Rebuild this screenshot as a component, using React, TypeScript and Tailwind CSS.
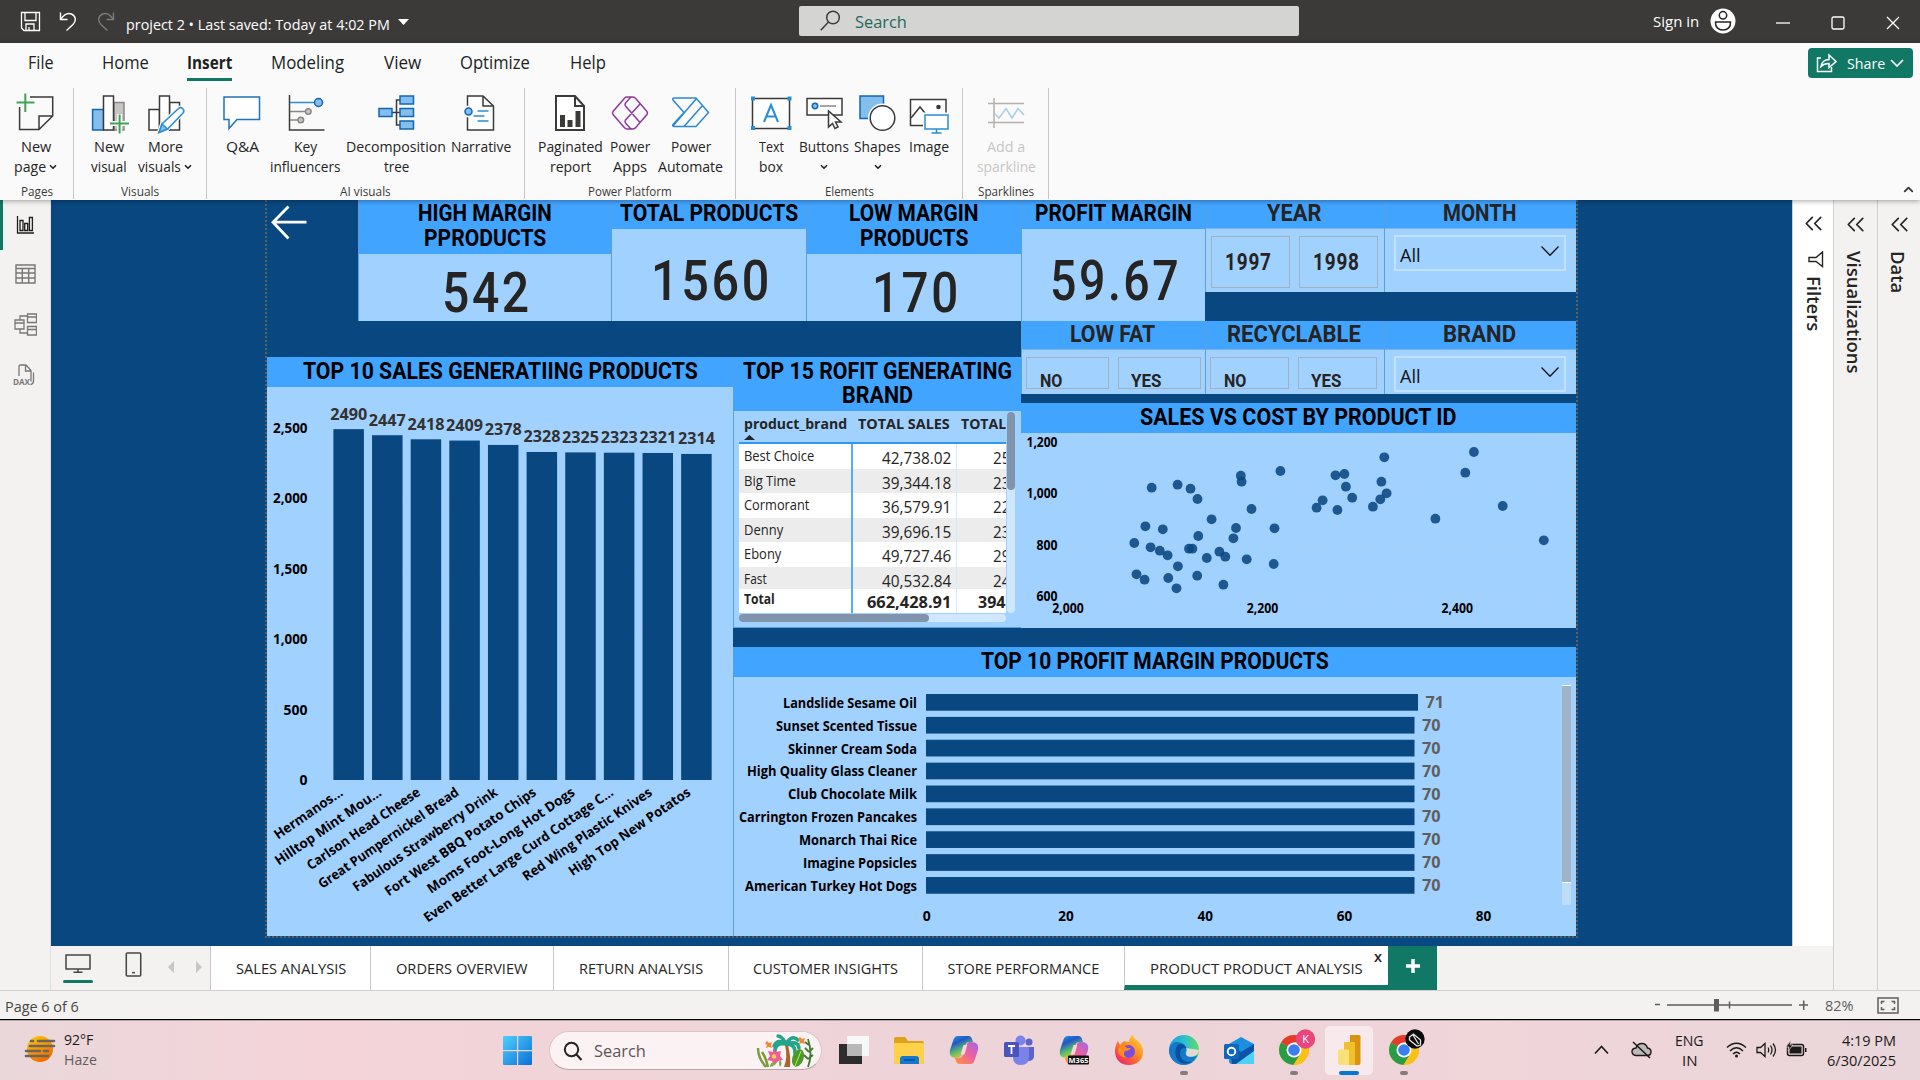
import { useLayoutEffect, useRef, useState } from "react";
import type { ReactNode } from "react";
import { ChevronDown, ChevronUp, ChevronsLeft } from "lucide-react";

/* Single line of text condensed or widened to a given width. */
function Fit({ w, className = "", children }: { w: number; className?: string; children: ReactNode }) {
  const ref = useRef<HTMLSpanElement>(null);
  const [k, setK] = useState(1);
  useLayoutEffect(() => {
    if (ref.current) setK(w / ref.current.offsetWidth);
  }, [w]);
  return (
    <span className="inline-block shrink-0 text-left" style={{ width: w }}>
      <span ref={ref} className={`inline-block origin-left whitespace-nowrap ${className}`} style={{ transform: `scaleX(${k})` }}>
        {children}
      </span>
    </span>
  );
}

const DIN = "font-['Roboto',sans-serif] font-bold text-[23px] leading-[25px]";

/* ---------- Title bar ---------- */
function TitleBar() {
  return (
    <header className="flex h-[43px] shrink-0 items-center bg-[#3b3a39] text-white">
      <div className="flex w-[799px] items-center pl-[20px]">
        <svg width="21" height="21" viewBox="0 0 21 21" fill="none" stroke="#fff" strokeWidth="1.3">
          <path d="M1.5 1.5h18v18H4L1.5 17zM5 1.5v8h11v-8M6 19.5v-6.5h8v6.5M9 16v3.5" />
        </svg>
        <svg className="ml-[18px]" width="19" height="21" viewBox="0 0 19 21" fill="none" stroke="#fff" strokeWidth="1.4">
          <path d="M1.5 1.5v7h7M1.8 8.2C5 3.5 9 1.5 12.500 3c4.500 2 5 7 1.500 10.500L7.500 19.500" />
        </svg>
        <svg className="ml-[18px]" width="19" height="21" viewBox="0 0 19 21" fill="none" stroke="#7d7b79" strokeWidth="1.4">
          <path d="M17.500 1.500v7h-7M17.200 8.200C14 3.500 10 1.500 6.500 3c-4.500 2-5 7-1.500 10.500L11.500 19.500" />
        </svg>
        <div className="ml-[11px] mt-[5px] flex items-center">
          <Fit w={264} className="text-[15px] leading-5">project 2 • Last saved: Today at 4:02 PM</Fit>
          <svg className="mb-1 ml-[8px]" width="11" height="6"><path d="M0 0h11L5.500 6z" fill="#fff" /></svg>
        </div>
      </div>
      <div className="mb-px flex h-[30px] w-[500px] items-center rounded-[2px] bg-[#d4d4d2] pl-[21px]">
        <svg className="mb-px" width="21" height="21" viewBox="0 0 21 21" fill="none" stroke="#3b3a39" strokeWidth="1.500">
          <circle cx="13" cy="7.500" r="6.300" /><path d="M8.500 12L.8 20.200" />
        </svg>
        <div className="ml-[14px] pt-px"><Fit w={52} className="text-[17px] leading-6 text-[#1f6a5c]">Search</Fit></div>
      </div>
      <div className="ml-[354px] flex items-center">
        <div className="pb-px"><Fit w={46} className="text-[15px] leading-5">Sign in</Fit></div>
        <svg className="mb-px ml-[11px]" width="26" height="26" viewBox="0 0 26 26">
          <circle cx="13" cy="13" r="12.500" fill="#fff" />
          <circle cx="13" cy="7.300" r="3.700" fill="none" stroke="#252423" strokeWidth="1.500" />
          <path d="M5.500 14h15c.3 5-2.700 8-7.500 8s-7.800-3-7.500-8z" fill="none" stroke="#252423" strokeWidth="1.500" />
        </svg>
        <svg className="ml-[40px]" width="14" height="14"><path d="M0 8h14" stroke="#fff" strokeWidth="1.300" /></svg>
        <svg className="ml-[41px] mt-[3px]" width="14" height="14"><rect x="1" y="1" width="12" height="12" rx="1.500" fill="none" stroke="#fff" strokeWidth="1.300" /></svg>
        <svg className="ml-[41px] mt-[3px]" width="14" height="14"><path d="M1 1l12 12M13 1L1 13" stroke="#fff" strokeWidth="1.300" /></svg>
      </div>
    </header>
  );
}

/* ---------- Ribbon ---------- */
const MENU: [string, number, string][] = [
  ["File", 26, "ml-[28px]"],
  ["Home", 47, "ml-[48px]"],
  ["Insert", 45, "ml-[38px]"],
  ["Modeling", 73, "ml-[39px]"],
  ["View", 37, "ml-[40px]"],
  ["Optimize", 70, "ml-[39px]"],
  ["Help", 36, "ml-[40px]"],
];

const D = "#3b3a39";
const B = "#2a8dd4";
const F = "#83beec";

const ICONS: Record<string, ReactNode> = {
  page: (<>
    <path d="M14 4H36.700V23L23 36.500H3.600V14M23 36.500V23H36.700" stroke={D} />
    <path d="M9.300 .5V19M.5 9.500H18.500" stroke="#3fa35a" strokeWidth="2" />
  </>),
  visual: (<>
    <rect x="3.600" y="16.500" width="11" height="20.500" fill={F} stroke="#1267b4" />
    <rect x="25" y="9.500" width="10" height="27.500" fill="#c8c6c4" stroke="#8a8886" />
    <rect x="14.500" y="3" width="10" height="34" fill="#fff" stroke={D} />
    <path d="M30.600 21V41M20.500 30.500H40" stroke="#fafafa" strokeWidth="5" />
    <path d="M30.600 21.500V40.500M21 30.500H40" stroke="#3fa35a" strokeWidth="2" />
  </>),
  more: (<>
    <rect x="4" y="16.500" width="10.500" height="20.500" fill="#fff" stroke={D} />
    <rect x="24.500" y="9.500" width="10" height="27.500" fill="#fff" stroke={D} />
    <rect x="14.500" y="3" width="10" height="34" fill="#fff" stroke={D} />
    <path d="M14 39.500L17 31 33.500 15.500c3-2.500 7 1.500 4.500 4.500L22.500 36z" fill="#fff" stroke="#fafafa" strokeWidth="4" />
    <path d="M14 39.500L17 31 33.500 15.500c3-2.500 7 1.500 4.500 4.500L22.500 36z" fill="#fff" stroke={B} />
    <path d="M14 39.500L17 31l5.500 5z" fill={F} stroke={B} />
  </>),
  qa: <path d="M37.500 4H2V26.500H7V35.500L15 26.500H37.500Z" fill="#fff" stroke="#1f73b7" />,
  key: (<>
    <path d="M3.500 2V37H38.500" stroke={D} />
    <path d="M4 9.500H29" stroke={B} /><circle cx="32.500" cy="9.500" r="4" fill={F} stroke="#1267b4" />
    <path d="M4 18.500H20M4 27H12" stroke="#8a8886" />
    <circle cx="22.300" cy="18.500" r="2.800" fill="#c8c6c4" stroke="#8a8886" />
    <circle cx="14.800" cy="27" r="2.800" fill="#c8c6c4" stroke="#8a8886" />
  </>),
  tree: (<>
    <path d="M16 19.500H24M24 7H20.500V32H24" stroke={D} />
    <g fill={F} stroke="#1267b4">
      <rect x="3" y="15.500" width="13" height="8" /><rect x="24" y="3" width="13.500" height="8" />
      <rect x="24" y="15.500" width="13.500" height="8" /><rect x="24" y="28" width="13.500" height="8" />
    </g>
  </>),
  narrative: (<>
    <path d="M6.500 3H22L32.500 13V37H6.500ZM22 3V13H32.500" fill="#fff" stroke={D} />
    <circle cx="7.500" cy="18.500" r="6" fill="#fafafa" stroke="none" />
    <circle cx="7.500" cy="18.500" r="3.500" fill={F} stroke="#1267b4" />
    <path d="M16.500 18H27.500M12.500 23H23.500M16.500 28H27.500" stroke={B} />
  </>),
  report: (<>
    <path d="M6 3H25L34 13V37H6ZM25 3V13H34" fill="#fff" stroke={D} strokeWidth="2" />
    <path d="M10 22h5v12h-5zM17.500 27h5v7h-5zM25.500 18h5v16h-5z" fill={D} stroke="none" />
  </>),
  apps: (<>
    <path d="M22 4H17Q15.500 4 14.500 5.200L3 18.500Q2 20 3 21.500L14.500 34.800Q15.500 36 17 36H22M22 4Q24 3.800 25.500 5.200L37 18.500Q38 20 37 21.500L25.500 34.800Q24 36 22.500 36Q21 36 20 35L15.500 30Q14.500 28.500 15.500 27L30 11M22 4Q20.500 4 19.500 5.500L15.500 10Q14.500 11.500 15.500 13L30 29.500" stroke="#8e3a9e" />
  </>),
  automate: <path d="M3 5H25L37.500 19.500 25 33.500H3Q1 33 2 31.500L13 19.500 2 7Q1 5.500 3 5ZM25.500 5.500L2 33M31.500 12.500L13 33.500" stroke="#2b88d8" />,
  text: (<>
    <rect x="1.500" y="5.500" width="37" height="30" fill="#fff" stroke={D} />
    <path d="M0 3.500h4v4H0zM36.500 3.500h4v4h-4zM0 33h4v4H0zM36.500 33h4v4h-4z" fill={B} stroke="none" />
    <path d="M13 29L20 12 27 29M15.500 23.500H24.500" stroke={B} strokeWidth="2" />
  </>),
  button: (<>
    <rect x="3" y="5.500" width="35" height="16.500" fill="#fff" stroke={D} />
    <circle cx="11" cy="13" r="2.700" fill={F} stroke="#1267b4" /><path d="M16 13H32" stroke="#8a8886" />
    <path d="M24.500 18V34L28.500 30.500 31 35.500 34 34 31.500 29H37Z" fill="#fff" stroke={D} strokeWidth="1.500" />
  </>),
  shapes: (<>
    <rect x="2" y="3" width="23.500" height="22.500" fill={F} stroke="#1267b4" />
    <circle cx="24.500" cy="25" r="14.500" fill="#fafafa" stroke="none" />
    <circle cx="24.500" cy="25" r="12.300" fill="#fff" stroke={D} />
  </>),
  image: (<>
    <rect x="1.500" y="6.500" width="35.500" height="26" fill="#fff" stroke={D} />
    <path d="M2 25L11 14 20 25" stroke={D} /><circle cx="29.500" cy="14" r="2.300" fill={D} stroke="none" />
    <rect x="14" y="19.500" width="27" height="21" fill="#fafafa" stroke="none" />
    <path d="M16 22H39V36H16ZM27.500 36V40M22.500 40H32.500" fill="#fff" stroke={B} />
  </>),
  spark: (<>
    <path d="M2 10.500H38M2 29.500H38M8 5V35" stroke="#b3b0ad" />
    <path d="M8 20L13 25 20 15.500 26 25 32 15.500 38 22" stroke="#a9cde8" />
  </>),
};

type Item = { w: string; icon: string; a: [string, number]; b?: [string, number]; chev?: boolean; off?: boolean };
const GROUPS: { w: string; name: string; nw: number; items: Item[] }[] = [
  { w: "w-[74px]", name: "Pages", nw: 32, items: [{ w: "w-[72px]", icon: "page", a: ["New", 30], b: ["page", 32], chev: true }] },
  { w: "w-[133px] pl-[6px]", name: "Visuals", nw: 38, items: [
    { w: "w-[57px]", icon: "visual", a: ["New", 30], b: ["visual", 36] },
    { w: "w-[56px]", icon: "more", a: ["More", 35], b: ["visuals", 43], chev: true }] },
  { w: "w-[318px]", name: "AI visuals", nw: 51, items: [
    { w: "w-[70px]", icon: "qa", a: ["Q&A", 33] },
    { w: "w-[57px]", icon: "key", a: ["Key", 23], b: ["influencers", 71] },
    { w: "w-[124px]", icon: "tree", a: ["Decomposition", 100], b: ["tree", 25] },
    { w: "w-[46px]", icon: "narrative", a: ["Narrative", 60] }] },
  { w: "w-[211px]", name: "Power Platform", nw: 84, items: [
    { w: "w-[90px]", icon: "report", a: ["Paginated", 65], b: ["report", 41] },
    { w: "w-[30px]", icon: "apps", a: ["Power", 40], b: ["Apps", 34] },
    { w: "w-[91px]", icon: "automate", a: ["Power", 40], b: ["Automate", 65] }] },
  { w: "w-[227px]", name: "Elements", nw: 49, items: [
    { w: "w-[70px]", icon: "text", a: ["Text", 25], b: ["box", 24] },
    { w: "w-[35px]", icon: "button", a: ["Buttons", 50], chev: true },
    { w: "w-[73px]", icon: "shapes", a: ["Shapes", 47], chev: true },
    { w: "w-[29px]", icon: "image", a: ["Image", 40] }] },
  { w: "w-[86px]", name: "Sparklines", nw: 56, items: [{ w: "w-[86px]", icon: "spark", a: ["Add a", 38], b: ["sparkline", 59], off: true }] },
];

function Ribbon() {
  return (
    <section className="z-10 flex h-[157px] shrink-0 flex-col bg-[#fafafa] shadow-[0_1px_5px_rgba(0,0,0,0.35)]">
      <div className="flex h-[45px] items-start">
        {MENU.map(([t, w, ml]) => (
          <div key={t} className={`flex h-[38px] flex-col justify-end ${ml}`}>
            <Fit w={w} className={t === "Insert" ? "text-[18px] leading-[31px] font-bold text-[#201f1e]" : "text-[18px] leading-[31px] text-[#201f1e]"}>{t}</Fit>
            <div className={t === "Insert" ? "h-[3px] bg-[#117865]" : "h-[3px]"} />
          </div>
        ))}
        <div className="ml-auto mr-[7px] mt-[5px] flex h-[30px] w-[105px] items-center rounded bg-[#117865] pl-2 text-white">
          <svg width="21" height="20" viewBox="0 0 21 20" fill="none" stroke="#fff" strokeWidth="1.500">
            <path d="M5 5H1.500V18.500H15.500V14M5 13.500C6 8.500 9 6.500 13 6.500V2L20 8.500 13 14.500V10.500C9.500 10.300 7 11.500 5 13.500z" />
          </svg>
          <div className="ml-[10px] pb-px"><Fit w={38} className="text-[15px] leading-5">Share</Fit></div>
          <svg className="ml-[5px]" width="14" height="8" viewBox="0 0 14 8" fill="none" stroke="#fff" strokeWidth="1.700"><path d="M1 1l6 6 6-6" /></svg>
        </div>
      </div>
      <div className="flex h-[112px]">
        {GROUPS.map((g) => (
          <div key={g.name} className={`flex h-[111px] flex-col justify-between border-r border-[#c8c6c4] ${g.w}`}>
            <div className="flex pt-[5px]">
              {g.items.map((it) => (
                <div key={it.icon} className={`flex shrink-0 flex-col items-center text-[15px] leading-5 ${it.w} ${it.off ? "text-[#c8c6c4]" : "text-[#252423]"}`}>
                  <svg className="mb-[3px] shrink-0 overflow-visible" width="40" height="40" viewBox="0 0 40 40" fill="none" strokeWidth="1.500">{ICONS[it.icon]}</svg>
                  <Fit w={it.a[1]}>{it.a[0]}</Fit>
                  <div className="flex h-5 items-center">
                    {it.b && <Fit w={it.b[1]}>{it.b[0]}</Fit>}
                    {it.chev && <ChevronDown className={it.b ? "ml-0.5 mt-0.5" : "mt-0.5"} size={10} strokeWidth={4} />}
                  </div>
                </div>
              ))}
            </div>
            <div className={`flex justify-center text-[12.5px] leading-[14px] text-[#3b3a39] ${g.name === "Visuals" ? "pr-[6px]" : ""}`}><Fit w={g.nw}>{g.name}</Fit></div>
          </div>
        ))}
        <ChevronUp className="ml-auto mr-[4px] mt-[94px]" size={15} strokeWidth={3} color="#3b3a39" />
      </div>
    </section>
  );
}

/* ---------- Left rail ---------- */
function Rail() {
  return (
    <nav className="flex w-[51px] shrink-0 flex-col border-r border-[#e1dfdd] bg-[#f3f2f1]">
      <div className="flex h-[50px] items-center border-l-[3px] border-[#117865] pl-[13px]">
        <svg width="18" height="18" viewBox="0 0 18 18" fill="none" stroke="#201f1e" strokeWidth="1.300">
          <path d="M1.500 0V17H18M4 4.500h3v10H4zM8.700 7.500h3v7h-3zM13.400 1.500h3v13h-3z" />
        </svg>
      </div>
      <div className="flex h-[50px] items-center pb-[2px] pl-[15px]">
        <svg width="21" height="20" viewBox="0 0 21 20" fill="none" stroke="#797775" strokeWidth="1.400">
          <path d="M1 1h19v18H1zM1 4.500h19M1 9h19M1 14h19M7.300 4.500V19M13.700 4.500V19" />
        </svg>
      </div>
      <div className="flex h-[50px] items-center pb-px pl-[14px]">
        <svg width="23" height="23" viewBox="0 0 23 23" fill="none" stroke="#797775" strokeWidth="1.300">
          <path d="M1 7h9v9H1zM1 10h9M13.500 1h9v8.500h-9zM13.500 4h9M13.500 13.500h9V22h-9zM13.500 16.500h9M6 7V3h7.500M6 16v4h7.500" />
        </svg>
      </div>
      <div className="flex h-[50px] items-center pl-[13px]">
        <svg width="23" height="22" viewBox="0 0 23 22" fill="none" stroke="#797775" strokeWidth="1.300">
          <path d="M6 12V2.500Q6 1 7.500 1H13L18 6.500V17.500M12.500 1.500V7H18M20.500 8.500V17q0 3-3 3.500" />
          <text x="0" y="20.500" fontSize="8.500" fontWeight="700" fill="#797775" stroke="none" textLength="17" lengthAdjust="spacingAndGlyphs">DAX</text>
        </svg>
      </div>
    </nav>
  );
}

/* ---------- Report visuals ---------- */
const EDGE = "border-l border-[#5d9fdd]";

function Card({ w, head, lines, value, vw, pt }: { w: string; head: string; lines: [string, number][]; value: string; vw: number; pt: string }) {
  return (
    <div className={`flex h-[121px] shrink-0 flex-col bg-[#a0d1ff] ${EDGE} ${w}`}>
      <div className={`flex shrink-0 flex-col items-center bg-[#41a4ff] pt-px pr-px text-black ${head}`}>
        {lines.map(([t, n], i) => <Fit key={t} w={n} className={i ? `${DIN} -mt-px` : DIN}>{t}</Fit>)}
      </div>
      <div className={`flex flex-1 items-center justify-center text-[#252423] ${pt}`}>
        <Fit w={vw} className="font-['Roboto',sans-serif] text-[55px] leading-[55px] font-medium tracking-[3px]">{value}</Fit>
      </div>
    </div>
  );
}

function SlicerHead({ t, w }: { t: string; w: number }) {
  return (
    <div className="flex h-[29px] shrink-0 justify-center border-b border-[#7fb4e4] bg-[#41a4ff] pr-[2px] pt-px text-[#252423]">
      <Fit w={w} className={DIN}>{t}</Fit>
    </div>
  );
}

function YearSlicer() {
  return (
    <div className={`flex h-[92px] w-[179px] flex-col bg-[#a0d1ff] ${EDGE}`}>
      <SlicerHead t="YEAR" w={54} />
      <div className="flex gap-[9px] pl-[5px] pt-[7px] text-[#252423]">
        {["1997", "1998"].map((y) => (
          <div key={y} className="flex h-[52px] w-[79px] items-center border border-[#a3b0bd] pl-[13px] pt-[2px]">
            <Fit w={47} className={`${DIN} tracking-[1px]`}>{y}</Fit>
          </div>
        ))}
      </div>
    </div>
  );
}

function YesNoSlicer({ t, w, box, btn }: { t: string; w: number; box: string; btn: string }) {
  return (
    <div className={`flex h-[73px] flex-col bg-[#a0d1ff] ${EDGE} ${box}`}>
      <SlicerHead t={t} w={w} />
      <div className="flex gap-[9px] pl-[4px] pt-[7px] text-[#252423]">
        <div className={`flex h-[32px] items-start border border-[#a3b0bd] pl-[13px] pt-[11px] ${btn}`}>
          <Fit w={22} className="font-['Roboto',sans-serif] text-[17.500px] leading-[20px] font-bold">NO</Fit>
        </div>
        <div className={`flex h-[32px] items-start border border-[#a3b0bd] pl-[12px] pt-[11px] ${btn}`}>
          <Fit w={30} className="font-['Roboto',sans-serif] text-[17.500px] leading-[20px] font-bold">YES</Fit>
        </div>
      </div>
    </div>
  );
}

function DropSlicer({ t, w, h }: { t: string; w: number; h: string }) {
  return (
    <div className={`flex flex-1 flex-col bg-[#a0d1ff] ${EDGE} ${h}`}>
      <SlicerHead t={t} w={w} />
      <div className="ml-[9px] mt-[6px] flex h-[36px] w-[172px] items-center justify-between border-2 border-[#c2e1ff] pl-[4px] pr-[5px]">
        <div className="mt-[4px]"><Fit w={21} className="text-[19px] leading-6 text-[#111]">All</Fit></div>
        <svg className="mb-[4px]" width="18" height="10" viewBox="0 0 18 10" fill="none" stroke="#111" strokeWidth="1.300"><path d="M.5 .5L9 9.300 17.500 .5" /></svg>
      </div>
    </div>
  );
}

const SALES: [string, number, number][] = [
  ["Hermanos...", 2490, 80],
  ["Hilltop Mint Mou...", 2447, 126],
  ["Carlson Head Cheese", 2418, 134],
  ["Great Pumpernickel Bread", 2409, 167],
  ["Fabulous Strawberry Drink", 2378, 172],
  ["Fort West BBQ Potato Chips", 2328, 180],
  ["Moms Foot-Long Hot Dogs", 2325, 175.5],
  ["Even Better Large Curd Cottage C...", 2323, 226.5],
  ["Red Wing Plastic Knives", 2321, 153.5],
  ["High Top New Potatos", 2314, 144.5],
];

function SalesChart() {
  return (
    <div className="col-start-1 row-span-2 row-start-2 flex flex-col bg-[#a0d1ff]">
      <div className="flex h-[30px] justify-center bg-[#41a4ff] pt-[2px] text-black">
        <Fit w={395} className={DIN}>TOP 10 SALES GENERATIING PRODUCTS</Fit>
      </div>
      <svg width="466" height="549" viewBox="267 387 466 549">
        {[0, 500, 1000, 1500, 2000, 2500].map((v) => (
          <g key={v}>
            <path d={`M317 ${780 - v * 0.1409}H727`} stroke="#b9c9d8" strokeWidth="1" strokeDasharray="1 5" />
            <text x="307.500" y={785 - v * 0.1409} textAnchor="end" fontSize="13.500" fontWeight="700" textLength={v >= 1000 ? 34.500 : v ? 24 : 8} lengthAdjust="spacingAndGlyphs">{v.toLocaleString("en-US")}</text>
          </g>
        ))}
        {SALES.map(([n, v, len], i) => {
          const x = 333.400 + i * 38.640;
          const y = 780 - v * 0.1409;
          return (
            <g key={n}>
              <rect x={x} y={y} width="30.500" height={780 - y} fill="#094780" />
              <text x={x + 15.300} y={y - 9.500} textAnchor="middle" fontSize="15.500" fontWeight="700" fill="#333231" textLength="37" lengthAdjust="spacingAndGlyphs">{v}</text>
              <text transform={`translate(${x + 10.500} 794.500) rotate(-34.500)`} textAnchor="end" fontSize="13.500" fontWeight="700" textLength={len} lengthAdjust="spacingAndGlyphs">{n}</text>
            </g>
          );
        })}
      </svg>
    </div>
  );
}

const ROWS: [string, number, string, string][] = [
  ["Best Choice", 70, "42,738.02", "25"],
  ["Big Time", 52, "39,344.18", "23"],
  ["Cormorant", 65, "36,579.91", "22"],
  ["Denny", 39, "39,696.15", "23"],
  ["Ebony", 37, "49,727.46", "29"],
  ["Fast", 23, "40,532.84", "24"],
];

function BrandTable() {
  return (
    <div className={`col-start-2 row-start-2 flex h-[271px] flex-col border-b border-[#3f7fb9] bg-[#a0d1ff] ${EDGE}`}>
      <div className="flex h-[54px] shrink-0 flex-col items-center bg-[#41a4ff] pt-[2px] text-black">
        <Fit w={269} className={DIN}>TOP 15 ROFIT GENERATING</Fit>
        <Fit w={71} className={`${DIN} -mt-[2px]`}>BRAND</Fit>
      </div>
      <div className="flex pl-[5px] pt-px">
        <div className="w-[267px] overflow-hidden text-[#252423]">
          <div className="flex h-[32px] border-b-2 border-[#2f97f7] text-[15px] leading-[23px] font-bold">
            <div className="flex w-[119px] shrink-0 flex-col pl-[5px]">
              <Fit w={103}>product_brand</Fit>
              <svg width="11" height="5"><path d="M0 5L5.500 0 11 5z" fill="#252423" /></svg>
            </div>
            <Fit w={92}>TOTAL SALES</Fit>
            <div className="ml-[11px]"><Fit w={45}>TOTAL</Fit></div>
          </div>
          {ROWS.map(([n, w, s, p], i) => (
            <div key={n} className={`flex ${i === 5 ? "h-[22px]" : "h-[24.600px]"} ${i % 2 ? "bg-[#ececec]" : "bg-white"}`}>
              <div className="w-[114px] shrink-0 border-r-2 border-[#55acfb] pl-[5px] text-[14px] leading-6"><Fit w={w}>{n}</Fit></div>
              <div className="flex w-[104px] shrink-0 justify-end border-r border-[#d5eaff] pr-[5px] pt-[4px] text-[16px] leading-5"><Fit w={69}>{s}</Fit></div>
              <div className="pl-[36px] pt-[4px] text-[16px] leading-5"><Fit w={17}>{p}</Fit></div>
            </div>
          ))}
          <div className="flex h-[24px] bg-white font-bold">
            <div className="w-[114px] shrink-0 border-r-2 border-[#55acfb] pl-[5px] text-[14px] leading-[20px]"><Fit w={31}>Total</Fit></div>
            <div className="flex w-[104px] shrink-0 justify-end border-r border-[#d5eaff] pr-[5px] pt-[3px] text-[16px] leading-5"><Fit w={84}>662,428.91</Fit></div>
            <div className="pl-[21px] pt-[3px] text-[16px] leading-5"><Fit w={27}>394</Fit></div>
          </div>
        </div>
        <div className="ml-px h-[201px] w-[8px] rounded-full bg-[#d0e8ff]"><div className="h-[78px] rounded-full bg-[#8095ad]" /></div>
      </div>
      <div className="ml-[5px] mt-px h-[8px] w-[267px] rounded-full bg-[#d0e8ff]"><div className="h-[8px] w-[190px] rounded-full bg-[#8095ad]" /></div>
    </div>
  );
}

const DOTS: [number, number][] = [
  [1151.7, 487.7], [1177.6, 484.7], [1190.5, 488.7], [1197.5, 499], [1145.4, 526.3], [1162.8, 529.3], [1134.3, 543],
  [1150.6, 547.3], [1159.8, 550.7], [1167.6, 555.3], [1136.5, 574.3], [1144.6, 579.7], [1168.3, 578], [1177.9, 566.3],
  [1176.5, 588.3], [1189, 548.7], [1192.4, 548.7], [1198.3, 536], [1211.6, 519.3], [1206.8, 558], [1197.2, 575.7],
  [1219.4, 551.7], [1225.3, 556.7], [1223.4, 584.7], [1233.4, 538.3], [1236, 528], [1246.7, 559.3], [1240.8, 475.7],
  [1241.6, 481.7], [1251.5, 509], [1274.5, 528.3], [1273.7, 564], [1280.4, 471], [1316.6, 507.7], [1322.6, 500.3],
  [1335.5, 475.3], [1344.4, 474], [1345.9, 486.7], [1337.4, 510], [1352.2, 497.7], [1384.3, 457.3], [1381.4, 481.7],
  [1386.6, 493.3], [1380.3, 499.3], [1372.9, 506.7], [1435.4, 518.7], [1465.3, 472.7], [1473.9, 452], [1502.7, 506], [1543.8, 540.3],
];

function Scatter() {
  return (
    <div className="mt-[9px] flex flex-col bg-[#a0d1ff]">
      <div className="flex h-[30px] justify-center bg-[#41a4ff] pt-[2px] text-black">
        <Fit w={317} className={DIN}>SALES VS COST BY PRODUCT ID</Fit>
      </div>
      <svg width="555" height="195" viewBox="1021 433 555 195" fontSize="13.500" fontWeight="700">
        {[["1,200", 442.3], ["1,000", 493.7], ["800", 545.3], ["600", 596.7]].map(([t, y]) => (
          <g key={t}>
            <path d={`M1068 ${y}H1555`} stroke="#b9c9d8" strokeDasharray="1 5" />
            <text x="1057.500" y={Number(y) + 4.500} textAnchor="end" textLength={String(t).length > 3 ? 31 : 21} lengthAdjust="spacingAndGlyphs">{t}</text>
          </g>
        ))}
        {[["2,000", 1068], ["2,200", 1262.6], ["2,400", 1457.2]].map(([t, x]) => (
          <g key={t}>
            <path d={`M${x} 442V597`} stroke="#b9c9d8" strokeDasharray="1 5" />
            <text x={x} y="613" textAnchor="middle" textLength="31.500" lengthAdjust="spacingAndGlyphs">{t}</text>
          </g>
        ))}
        {DOTS.map(([x, y]) => <circle key={`${x}-${y}`} cx={x} cy={y} r="4.900" fill="#094780" fillOpacity="0.870" />)}
      </svg>
    </div>
  );
}

const MARGINS: [string, number, number][] = [
  ["Landslide Sesame Oil", 134, 71],
  ["Sunset Scented Tissue", 141, 70],
  ["Skinner Cream Soda", 129, 70],
  ["High Quality Glass Cleaner", 170, 70],
  ["Club Chocolate Milk", 129, 70],
  ["Carrington Frozen Pancakes", 178, 70],
  ["Monarch Thai Rice", 118, 70],
  ["Imagine Popsicles", 114, 70],
  ["American Turkey Hot Dogs", 172, 70],
];

function MarginChart() {
  return (
    <div className={`col-span-2 col-start-2 row-start-3 mt-[19px] flex flex-col bg-[#a0d1ff] ${EDGE}`}>
      <div className="flex h-[30px] justify-center bg-[#41a4ff] pr-px pt-[2px] text-black">
        <Fit w={348} className={DIN}>TOP 10 PROFIT MARGIN PRODUCTS</Fit>
      </div>
      <svg width="842" height="259" viewBox="734 677 842 259">
        {MARGINS.map(([n, len, v], i) => {
          const y = 694 + i * 22.880;
          const w = v === 71 ? 492 : 488.500;
          return (
            <g key={n}>
              <rect x="926" y={y} width={w} height="16.700" fill="#094780" />
              <text x="917" y={y + 13.800} textAnchor="end" fontSize="13.500" fontWeight="700" textLength={len} lengthAdjust="spacingAndGlyphs">{n}</text>
              <text x={926 + w + 7.500} y={y + 14} fontSize="16" fontWeight="700" fill="#605e5c" textLength="18.500" lengthAdjust="spacingAndGlyphs">{v}</text>
            </g>
          );
        })}
        {[0, 20, 40, 60, 80].map((v) => (
          <text key={v} x={926.800 + v * 6.960} y="921" textAnchor="middle" fontSize="13.500" fontWeight="700" textLength={v ? 15.500 : 8} lengthAdjust="spacingAndGlyphs">{v}</text>
        ))}
        <rect x="1562" y="685" width="9" height="220" fill="#bfdcf8" />
        <rect x="1562" y="685" width="9" height="198" fill="#fff" />
        <rect x="1562" y="686" width="9" height="196" fill="#a0b3c7" />
      </svg>
    </div>
  );
}

function ReportPage() {
  return (
    <div className="ml-[214px] grid h-[738px] w-[1313px] grid-cols-[466px_288px_555px] grid-rows-[157px_271px_308px] border-x-2 border-b-2 border-dotted border-[#605e5c]">
      <div className="col-span-2 col-start-1 row-start-1 flex">
        <div className="w-[91px] pl-[4px] pt-[5px]">
          <svg width="36" height="36" viewBox="0 0 36 36" fill="none" stroke="#fff" strokeWidth="2.800"><path d="M35.500 17.200H2M17.500 1.500L2 17.200 17.500 33.500" /></svg>
        </div>
        <Card w="w-[253px]" head="h-[54px]" lines={[["HIGH MARGIN", 134], ["PPRODUCTS", 122]]} value="542" vw={90} pt="pl-[3px] pt-[12px]" />
        <Card w="w-[195px]" head="h-[29px]" lines={[["TOTAL PRODUCTS", 178]]} value="1560" vw={121} pt="pl-[5px] pt-[12px]" />
        <Card w="w-[215px]" head="h-[54px]" lines={[["LOW MARGIN", 130], ["PRODUCTS", 108]]} value="170" vw={89} pt="pl-[5px] pt-[12px]" />
      </div>
      <div className="col-start-3 row-span-2 row-start-1 flex flex-col">
        <div className="flex h-[121px]">
          <Card w="w-[184px]" head="h-[29px]" lines={[["PROFIT MARGIN", 157]]} value="59.67" vw={131} pt="pl-[4px] pt-[12px]" />
          <YearSlicer />
          <DropSlicer t="MONTH" w={73} h="h-[92px]" />
        </div>
        <div className="flex h-[73px]">
          <YesNoSlicer t="LOW FAT" w={85} box="w-[184px]" btn="w-[83px]" />
          <YesNoSlicer t="RECYCLABLE" w={134} box="w-[179px]" btn="w-[79px]" />
          <DropSlicer t="BRAND" w={73} h="h-[73px]" />
        </div>
        <Scatter />
      </div>
      <SalesChart />
      <BrandTable />
      <MarginChart />
    </div>
  );
}

/* ---------- Page tabs ---------- */
const TABS: [string, number, string][] = [
  ["SALES ANALYSIS", 110, "w-[160px]"],
  ["ORDERS OVERVIEW", 132, "w-[183px]"],
  ["RETURN ANALYSIS", 124, "w-[175px]"],
  ["CUSTOMER INSIGHTS", 145, "w-[194px]"],
  ["STORE PERFORMANCE", 152, "w-[202px]"],
];

function PageTabs() {
  return (
    <div className="flex h-[44px] shrink-0 bg-[#f3f2f1] text-[14.500px] leading-5 text-[#252423]">
      <div className="flex w-[159px] pl-[12px] pt-[6px]">
        <div className="flex w-[30px] flex-col items-center">
          <svg className="mt-[2px]" width="26" height="19" viewBox="0 0 26 19" fill="none" stroke="#484644" strokeWidth="1.500"><path d="M1 1h24v14H1zM13 15v3.300M8.500 18.200h9" /></svg>
          <div className="mt-[7px] h-[3px] w-[30px] rounded-full bg-[#117865]" />
        </div>
        <svg className="ml-[32px]" width="17" height="25" viewBox="0 0 17 26" fill="none" stroke="#484644" strokeWidth="1.600"><rect x="1" y="1" width="15" height="24" rx="1" /><path d="M7 21.500h3" /></svg>
        <svg className="ml-[26px] mt-[9px]" width="34" height="12"><path d="M6 0v12L0 6zM28 0v12l6-6z" fill="#c8c6c4" /></svg>
      </div>
      {TABS.map(([t, w, cls]) => (
        <div key={t} className={`flex shrink-0 items-center justify-center border-l border-[#c8c6c4] bg-white pt-0.5 ${cls}`}><Fit w={w}>{t}</Fit></div>
      ))}
      <div className="flex w-[264px] shrink-0 border-b-[5px] border-l border-[#117865] border-l-[#c8c6c4] bg-white pl-[25px]">
        <div className="pt-[13px]"><Fit w={213}>PRODUCT PRODUCT ANALYSIS</Fit></div>
        <div className="ml-[11px] pt-px"><Fit w={8} className="font-semibold">x</Fit></div>
      </div>
      <div className="flex w-[49px] items-center justify-center bg-[#117865]">
        <svg className="mb-1" width="14" height="14"><path d="M7 0v14M0 7h14" stroke="#fff" strokeWidth="3.500" /></svg>
      </div>
    </div>
  );
}

function StatusBar() {
  return (
    <div className="flex h-[30px] shrink-0 items-center border-b border-t border-b-black border-t-[#d2d0ce] bg-[#f3f2f1] pl-[5px] pr-[21px] pt-[2px] text-[15px] leading-5 text-[#484644]">
      <Fit w={74}>Page 6 of 6</Fit>
      <svg className="mb-[2px] ml-auto" width="154" height="14" viewBox="0 0 154 14" fill="none" stroke="#605e5c" strokeWidth="1.500">
        <path d="M1 6.500H6M13 7H138M75.500 3.500v7M145 7h9.500M149.700 2.500v9.500" /><rect x="60" y="1" width="5" height="12.500" fill="#605e5c" stroke="none" />
      </svg>
      <div className="mb-[3px] ml-[17px] text-[#605e5c]"><Fit w={29}>82%</Fit></div>
      <svg className="mb-[2px] ml-[23px]" width="22" height="17" viewBox="0 0 22 17" fill="none" stroke="#605e5c" strokeWidth="1.500"><path d="M1 1h20v15H1zM4.500 7V4.500H7.500M14.500 4.500H17.500V7M17.500 10v2.500H14.500M7.500 12.500H4.500V10" /></svg>
    </div>
  );
}

/* ---------- Side panes ---------- */
function SidePane({ label, cls, icon }: { label: string; cls: string; icon?: boolean }) {
  return (
    <aside className={`flex shrink-0 flex-col items-center border-l border-[#d2d0ce] text-[#252423] ${cls} ${icon ? "pt-[9px]" : "pt-[10px]"}`}>
      <ChevronsLeft size={29} strokeWidth={1.400} />
      {icon && <svg className="ml-[5px] mt-[13px] shrink-0" width="17" height="17" viewBox="0 0 17 17" fill="none" stroke="#252423" strokeWidth="1.400"><path d="M15.500 1V15.500L9 10.500H2V6.500H9Z" /></svg>}
      <div className={`text-[18.500px] leading-6 font-semibold [writing-mode:vertical-rl] ${icon ? "ml-[2px] mt-[8px]" : "mr-[3px] mt-[12px]"}`}>{label}</div>
    </aside>
  );
}

/* ---------- Taskbar ---------- */
function Chrome() {
  return (
    <g>
      <circle cx="15" cy="15" r="15" fill="#fbc116" />
      <path d="M15 15L2 7.500A15 15 0 0 1 28 7.500H15z" fill="#e33b2e" />
      <path d="M15 15L2 7.500A15 15 0 0 0 14.500 30L21.500 18.700z" fill="#2a9c48" />
      <path d="M15 7.500H28A15 15 0 0 1 14.500 30L21.500 18.700z" fill="#fbc116" />
      <circle cx="15" cy="15" r="7.500" fill="#fff" /><circle cx="15" cy="15" r="5.800" fill="#3b7ded" />
    </g>
  );
}

function Copilot() {
  return (
    <g>
      <path d="M9 1h10c3 0 4 2 5 6h-4c-2 0-3 1-4 4l-4 10c-1 2-2 2-4 2-6 0-8-3-7-8L4 6c.8-3 2-5 5-5z" fill="url(#cpA)" />
      <path d="M21 29H11c-3 0-4-2-5-6h4c2 0 3-1 4-4l4-10c1-2 2-2 4-2 6 0 8 3 7 8l-3 9c-.8 3-2 5-5 5z" fill="url(#cpB)" />
      <path d="M14.500 10l-2.800 9.500h3.800l2.800-9.500z" fill="#f3d9de" />
    </g>
  );
}

const TASKS: { id: string; art: ReactNode; dot?: boolean; active?: boolean }[] = [
  { id: "view", art: (<><path d="M0 9h23v20H0z" fill="#2d2d2d" /><path d="M8 1h22v20H8z" fill="#f8f8f8" /><path d="M8 9h15v12H8z" fill="#b8b8b8" /></>) },
  { id: "files", art: (<><path d="M0 4q0-2 2-2h9l3 4H28q2 0 2 2v19q0 2-2 2H2q-2 0-2-2z" fill="#e2a11b" /><path d="M0 8H30V27q0 2-2 2H2q-2 0-2-2z" fill="#ffd04a" /><path d="M6 29V24q0-3 3-3H22q3 0 3 3V29z" fill="#1379d0" /><path d="M10 25h11" stroke="#0a4f94" strokeWidth="1.500" /></>) },
  { id: "copilot", art: <Copilot /> },
  { id: "teams", art: (<><circle cx="25" cy="7" r="3.500" fill="#5b62c8" /><circle cx="16.500" cy="5.500" r="5" fill="#7b83eb" /><path d="M20 12h10v9q0 5-6 5z" fill="#5b62c8" /><path d="M9 12h16v10q0 8-8 8t-8-8z" fill="#7b83eb" /><rect x="0" y="7" width="15" height="15" rx="1.500" fill="#4b53bc" /><path d="M4 11h7M7.500 11v8" stroke="#fff" strokeWidth="1.800" /></>) },
  { id: "m365", art: (<><Copilot /><rect x="9" y="20.500" width="21" height="9" rx="1" fill="#111" /><text x="19.500" y="28" fontSize="7.500" fontWeight="700" fill="#fff" textAnchor="middle">M365</text></>) },
  { id: "firefox", art: (<><path d="M15 30C6 30 1 24 1 16c0-4 1-7 3-10l2 4 4-4c2 0 3 1 5 1 0-3 2-6 4-7 0 3 3 4 6 7 3 3 4 6 4 10 0 8-6 13-14 13z" fill="url(#ff)" /><circle cx="14.500" cy="16.500" r="6.500" fill="#7a4de0" /><path d="M5 10q4-1 8 3l4 0q-2 3-6 3-3 4 2 6.500-8 0-9-6z" fill="#ff8a1f" /></>) },
  { id: "edge", dot: true, art: (<><circle cx="15" cy="15" r="15" fill="url(#ed)" /><path d="M0 15C1 8 6 6 10 7.500 16 8 18 12 17 16c-1 3 0 6 5 6 3 0 5-1 6.500-2C26 26 21 30 15 30 6 30 0 23 0 15z" fill="#1578c8" /><path d="M10 9c-5 4-5 13 1 18 3 2 8 2 12 0-7 1-12-3-12-8 0-4 2-6 4-6 2 0 3 1 2 4 2-5-2-8-7-8z" fill="#0c4f9e" /><path d="M17 13c2 2 0 4 0 6 0 2 3 3 6 2.500 4-.5 7-3 7-6.500z" fill="#f3d9de" opacity="0.900" /></>) },
  { id: "outlook", art: (<><path d="M5 9L17 2 30 9V27q0 2-2 2H8q-3 0-3-3z" fill="#1a8fe0" /><path d="M5 9l12 8 13-8v7L15 29H8z" fill="#0a53a5" /><path d="M12 29L30 16V27q0 2-2 2z" fill="#4fd0f5" /><rect x="0" y="9" width="15" height="15" rx="1.500" fill="#0f66bd" /><circle cx="7.500" cy="16.500" r="3.800" fill="none" stroke="#fff" strokeWidth="1.900" /></>) },
  { id: "chrome1", dot: true, art: (<><Chrome /><circle cx="26.500" cy="4" r="9.700" fill="#e8467f" /><text x="26.500" y="8" fontSize="11" fill="#fff" textAnchor="middle">K</text></>) },
  { id: "bi", active: true, art: (<><path d="M16 0h9q1.500 0 1.500 1.500V28q0 2-2 2H16z" fill="#d8930f" /><path d="M10 8q0-1 1-1h9q1 0 1 1V30H10z" fill="#f0c12e" /><path d="M4 16q0-1.500 1-1.500h9q1 0 1 1.500V30H6q-2 0-2-2z" fill="#fbe07a" /></>) },
  { id: "chrome2", dot: true, art: (<><Chrome /><circle cx="26" cy="4" r="9.700" fill="#0b0b0b" /><path d="M20.500 2l4-3 7 6v5l-3.500 1-7.500-6zM24 0l5.500 9" fill="none" stroke="#e8e8e8" strokeWidth="1.300" /></>) },
];

function Taskbar() {
  return (
    <footer className="flex h-[60px] shrink-0 items-center border-t border-[#b5a5a8] bg-[linear-gradient(90deg,#ead7da_0%,#f4d4d9_17%,#f0d4d8_30%,#ecd4d8_60%,#f0d5d9_78%,#e9d6da_100%)] text-[15px] leading-5 text-[#1b1a19]">
      <svg width="0" height="0">
        <defs>
          <linearGradient id="cpA" x1="0" y1="0" x2="0.500" y2="1"><stop offset="0" stopColor="#1ea6e8" /><stop offset="0.350" stopColor="#2456c8" /><stop offset="0.700" stopColor="#5cc06a" /><stop offset="1" stopColor="#f2c12e" /></linearGradient>
          <linearGradient id="cpB" x1="1" y1="0" x2="0" y2="1"><stop offset="0" stopColor="#a065e8" /><stop offset="0.500" stopColor="#f0619a" /><stop offset="1" stopColor="#ff9a3c" /></linearGradient>
          <linearGradient id="ff" x1="1" y1="0" x2="0.200" y2="1"><stop offset="0" stopColor="#ffe14a" /><stop offset="0.500" stopColor="#ff8a1f" /><stop offset="1" stopColor="#f0206a" /></linearGradient>
          <linearGradient id="ed" x1="0" y1="0.300" x2="1" y2="0.300"><stop offset="0" stopColor="#1b9de0" /><stop offset="0.550" stopColor="#2fc3c9" /><stop offset="1" stopColor="#62db5c" /></linearGradient>
          <linearGradient id="wn" x1="0" y1="0" x2="1" y2="1"><stop offset="0" stopColor="#4fd0fb" /><stop offset="1" stopColor="#0a6fd6" /></linearGradient>
          <linearGradient id="sn" x1="0" y1="0" x2="0.600" y2="1"><stop offset="0" stopColor="#ffcb05" /><stop offset="1" stopColor="#ef6c00" /></linearGradient>
        </defs>
      </svg>
      <div className="flex w-[503px] items-center pb-[4px] pl-[24px]">
        <svg width="32" height="28" viewBox="0 0 32 28"><circle cx="16" cy="14" r="13" fill="url(#sn)" /><path d="M7 6h2M14 6h16M6 11h24M2 16h14M20 16h4M2 21h22" stroke="#6b6460" strokeWidth="2.600" strokeLinecap="round" /></svg>
        <div className="ml-[8px] flex flex-col"><Fit w={29}>92°F</Fit><Fit w={33} className="text-[#605e5c]">Haze</Fit></div>
      </div>
      <svg width="29" height="29" viewBox="0 0 29 29"><path d="M0 1q0-1 1-1H14V14H0zM15.200 0H28q1 0 1 1V14H15.200zM0 15.200H14V29H1q-1 0-1-1zM15.200 15.200H29V28q0 1-1 1H15.200z" fill="url(#wn)" /></svg>
      <div className="ml-[17px] flex h-[39px] w-[273px] items-center rounded-full border border-[#dcc5ca] border-b-[#b9a3a8] bg-[#fbf2f3] pl-[13px]">
        <svg width="20" height="20" viewBox="0 0 20 20" fill="none" stroke="#252423" strokeWidth="2"><circle cx="8.500" cy="8.500" r="6.700" /><path d="M13.500 13.500l5 5.500" /></svg>
        <div className="ml-[11px]"><Fit w={52} className="text-[17px] leading-6 text-[#5b5557]">Search</Fit></div>
        <svg className="ml-auto mr-[7px]" width="58" height="34" viewBox="0 0 58 34" fill="none">
          <path d="M10 33Q2 24 2 14M12 33Q10 24 6 18" stroke="#7d9b3a" strokeWidth="2.500" />
          <path d="M28 33q4-10 1-22h3q3 12 2 22z" fill="#a5672f" />
          <path d="M30 10Q22 4 18 12M30 10Q18 8 19 20M30 10Q26 2 22 2M30 10Q36 0 42 6M30 10Q42 6 43 14M30 10Q40 10 39 20" stroke="#23a58a" strokeWidth="3.500" strokeLinecap="round" />
          <ellipse cx="42" cy="24" rx="5.500" ry="9" fill="#4c9a2a" transform="rotate(20 42 24)" /><path d="M39 32l6-15" stroke="#bfe36a" />
          <path d="M52 33Q57 20 52 5M52 25l5-4M53 18l4-4M52 25l-4-4M53 18l-4-4M53 11l-4-3" stroke="#3e7a35" strokeWidth="1.800" />
          <path d="M17 14l3 4 5-1-1 5 3 4-5 1-3 4-3-4-5-1 3-4-2-5 5 1z" fill="#ee5c9a" /><circle cx="18" cy="22.500" r="2.300" fill="#ffd04a" />
          <path d="M11 7l2 2 3-1-1 3 1 3-3-1-3 1 1-3-2-2zM44 3l2 2 3-1-1 3 1 3-3-1-3 1 1-3-2-2z" fill="#f7852b" />
          <path d="M14 33q0-5 5-5 1 4-5 5zM24 33q-2-4 0-7 3 3 0 7z" fill="#6fb13a" />
        </svg>
      </div>
      <div className="ml-[4px] flex">
        {TASKS.map((t) => (
          <div key={t.id} className="flex h-[52px] w-[55px] flex-col items-center justify-center">
            <div className={`flex h-[49px] w-[48px] flex-col items-center rounded-[5px] pt-[9px] ${t.active ? "bg-[#f8eaec]" : ""}`}>
              <svg className="shrink-0 overflow-visible" width="30" height="30" viewBox="0 0 30 30">{t.art}</svg>
              <div className={t.active ? "mt-[6px] h-[4px] w-[20px] rounded-full bg-[#0078d4]" : t.dot ? "mt-[6px] h-[4px] w-[8px] rounded-full bg-[#857b7e]" : "h-0"} />
            </div>
          </div>
        ))}
      </div>
      <div className="ml-[163px] flex items-center pb-[2px]">
        <svg width="15" height="10" viewBox="0 0 15 10" fill="none" stroke="#1b1a19" strokeWidth="1.600"><path d="M1 8.500L7.500 1.500 14 8.500" /></svg>
        <svg className="ml-[22px]" width="21" height="18" viewBox="0 0 21 18"><path d="M5 14.500Q1 14 1 10.500 1 7.500 5 7 6.500 2.500 11 2.500q4 0 5.500 4.500 3.500.5 3.500 4t-4 3.500z" fill="#bdb7b8" stroke="#1b1a19" strokeWidth="1.400" /><path d="M2 1l17 16" stroke="#1b1a19" strokeWidth="1.600" /></svg>
        <div className="ml-[22px] flex w-[31px] flex-col items-center"><Fit w={29}>ENG</Fit><Fit w={15}>IN</Fit></div>
        <svg className="ml-[21px]" width="21" height="16" viewBox="0 0 21 16" fill="none" stroke="#1b1a19" strokeWidth="1.500"><path d="M1 5.500Q10.500-3 20 5.500M4 9Q10.500 2.500 17 9M7 12Q10.500 8.500 14 12" /><circle cx="10.500" cy="14" r="1.500" fill="#1b1a19" stroke="none" /></svg>
        <svg className="ml-[9px]" width="21" height="16" viewBox="0 0 21 16" fill="none" stroke="#1b1a19" strokeWidth="1.300"><path d="M1 5.500H4.500L9 1.500v13L4.500 10.500H1zM12 5.500q1.500 2.500 0 5M14.500 3.500q3 4.500 0 9M17 1.500q5 6.500 0 13" /></svg>
        <svg className="mb-[3px] ml-[9px]" width="21" height="17" viewBox="0 0 21 17"><rect x="1.500" y="4.500" width="16" height="11" rx="2" fill="none" stroke="#1b1a19" strokeWidth="1.500" /><rect x="3.500" y="6.500" width="12" height="7" fill="#1b1a19" /><path d="M19 8h1.500v4H19z" fill="#1b1a19" /><path d="M5 0L0 7h3L2 11 7 5H4z" fill="#1b1a19" stroke="#efd5d9" strokeWidth="0.700" /></svg>
        <div className="ml-[20px] flex w-[69px] flex-col items-end"><Fit w={54}>4:19 PM</Fit><Fit w={69}>6/30/2025</Fit></div>
      </div>
    </footer>
  );
}

export default function App() {
  return (
    <div className="flex h-[1080px] w-[1920px] flex-col overflow-hidden bg-[#f3f2f1] font-['Open_Sans','Noto_Sans',sans-serif]">
      <TitleBar />
      <Ribbon />
      <div className="flex h-[790px] shrink-0">
        <Rail />
        <main className="flex w-[1782px] shrink-0 flex-col">
          <div className="flex h-[746px]">
            <div className="w-[1741px] shrink-0 bg-[#094780]"><ReportPage /></div>
            <SidePane label="Filters" icon cls="w-[41px] bg-white" />
          </div>
          <PageTabs />
        </main>
        <SidePane label="Visualizations" cls="w-[44px] bg-[#f3f2f1]" />
        <SidePane label="Data" cls="w-[43px] bg-[#f3f2f1]" />
      </div>
      <StatusBar />
      <Taskbar />
    </div>
  );
}
